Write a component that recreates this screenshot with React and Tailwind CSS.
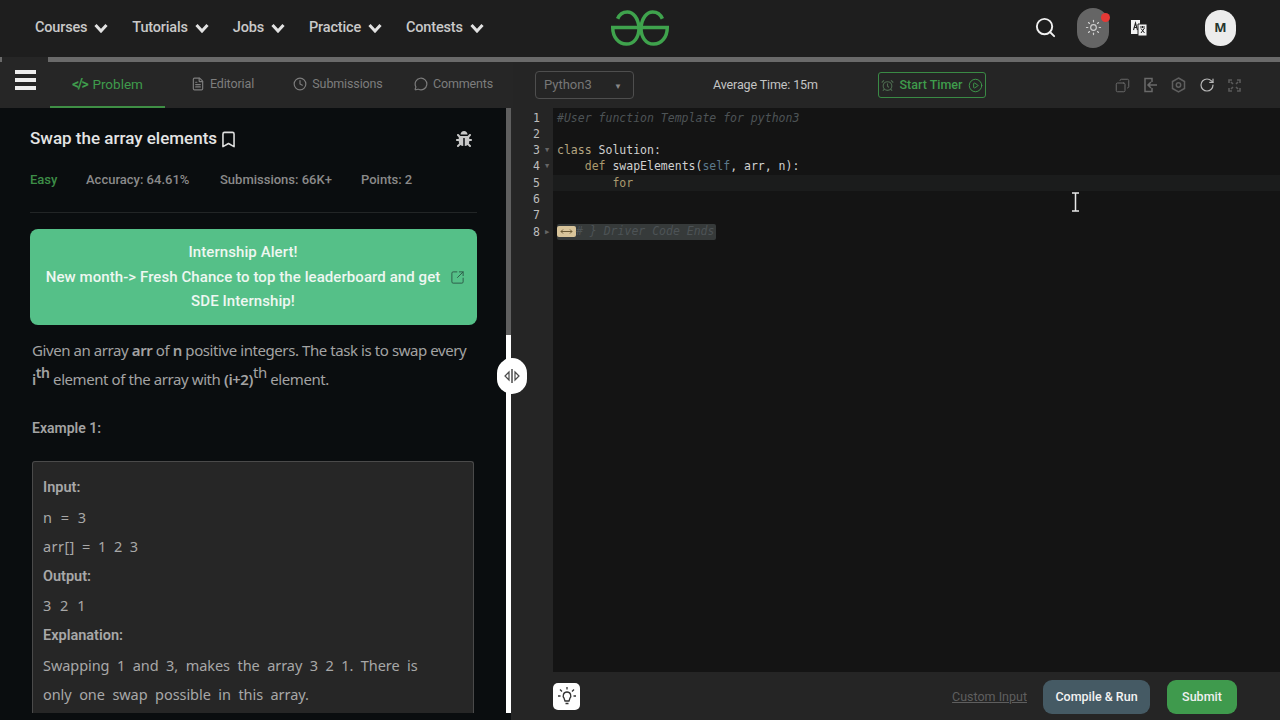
import React from "react";
import { Search, Sun, Bookmark, Clock, FileText, MessageCircle, Copy, RotateCw, SquareArrowOutUpRight, AlarmClock, CirclePlay } from "lucide-react";
import { FaBug } from "react-icons/fa";

const F = { fontFamily: '"Noto Sans", sans-serif' };

function NavItem({ label }) {
  return (
    <div className="flex items-center gap-[7px]">
      <span className="font-['Roboto'] text-[14.5px] font-medium tracking-[-0.012em] text-[#c9c9c9] whitespace-nowrap">{label}</span>
      <svg width="14" height="10" viewBox="0 0 14 10" fill="none" stroke="#e2e2e2" strokeWidth="3"><path d="M1.5 2 L7 8 L12.5 2" /></svg>
    </div>
  );
}

function Logo() {
  return (
    <svg className="mt-[2px]" width="60" height="37" viewBox="0 0 60 38" fill="none" stroke="#3fa34d" strokeWidth="3.6">
      <path d="M7 9 C9 4 13 2 17 2 C23 2 28 8 29 18" />
      <path d="M53 9 C51 4 47 2 43 2 C37 2 32 8 31 18" />
      <path d="M2 18 H29 C29 28 24 35 16 35 C8 35 2 28 2 18 Z" />
      <path d="M58 18 H31 C31 28 36 35 44 35 C52 35 58 28 58 18 Z" />
    </svg>
  );
}

function Translate() {
  return (
    <svg width="18" height="18" viewBox="0 0 18 18">
      <path d="M1 1 H10 V15 H1 Z" fill="#f2f2f2" />
      <path d="M8 5 H17 V17 H8 Z" fill="#f2f2f2" stroke="#222" strokeWidth="1" />
      <path d="M3.5 11 L5.5 4 L7.5 11 M4.3 8.5 H6.7" stroke="#222" strokeWidth="1.1" fill="none" />
      <path d="M10 8 H15 M12.5 7 V9 M11 14 L14.5 9 M11 9.5 L14.5 14" stroke="#222" strokeWidth="1" fill="none" />
    </svg>
  );
}

function TopBar() {
  return (
    <header className="grid h-[57px] shrink-0 grid-cols-[minmax(0,1fr)_auto_minmax(0,1fr)] items-center bg-[#1e1e1e] pb-[2px]">
      <nav className="flex items-center gap-[24px] pl-[35px]">
        <NavItem label="Courses" />
        <NavItem label="Tutorials" />
        <NavItem label="Jobs" />
        <NavItem label="Practice" />
        <NavItem label="Contests" />
      </nav>
      <Logo />
      <div className="flex items-center justify-end pr-[44px]">
        <Search size={23} strokeWidth={2} className="mr-[20px] text-[#f0f0f0]" />
        <div className="relative mr-[21px] flex h-[40px] w-[32px] items-center justify-center rounded-full bg-[#656565]">
          <Sun size={17} strokeWidth={1.6} className="text-[#cfcfcf]" />
          <span className="absolute right-[-1px] top-[5px] h-[9px] w-[9px] rounded-full bg-[#e53935]" />
        </div>
        <div className="mr-[57px]"><Translate /></div>
        <div className="flex h-[36px] w-[31px] items-center justify-center rounded-full bg-[#ececec] text-[13px] font-bold text-[#26352d]">M</div>
      </div>
    </header>
  );
}

function Tab({ icon, label, active, className }) {
  return (
    <div className={`flex h-[46px] items-center justify-center gap-[5px] border-b-2 font-['Roboto'] ${active ? "border-[#3f8f45] text-[13.5px] text-[#3f9c4c]" : "border-transparent text-[12.5px] tracking-[-0.01em] text-[#7d7d7d]"} ${className}`}>
      {icon}
      <span className="whitespace-nowrap">{label}</span>
    </div>
  );
}

function LeftPanel() {
  return (
    <section className="relative flex w-[513px] shrink-0 flex-col">
      <div className="flex h-[46px] shrink-0 items-center bg-[#262626] pl-[50px]">
        <Tab active className="w-[115px]" label="Problem" icon={<span className="text-[14px] font-bold tracking-[-0.1em]">&lt;/&gt;</span>} />
        <Tab className="ml-[25px] w-[65px]" label="Editorial" icon={<FileText size={14} className="shrink-0" />} />
        <Tab className="ml-[40px] w-[86px]" label="Submissions" icon={<Clock size={14} className="shrink-0" />} />
        <Tab className="ml-[33px] w-[79px]" label="Comments" icon={<MessageCircle size={14} className="shrink-0" />} />
      </div>
      <div className="absolute left-[2px] top-[-5px] flex h-[46px] w-[46px] flex-col items-center justify-center gap-[4px] bg-[#262626]">
        <span className="h-[4px] w-[21px] bg-[#eeeeee]" />
        <span className="h-[4px] w-[21px] bg-[#eeeeee]" />
        <span className="h-[4px] w-[21px] bg-[#eeeeee]" />
      </div>
      <div className="flex min-h-0 flex-1 bg-[#0a0d0f]">
        <div className="min-w-0 flex-1">
          <div className="h-[605px] overflow-hidden pl-[30px] pr-[29px]">
            <div className="mt-[19px] flex h-[24px] items-center justify-between pr-[5px]">
              <div className="flex items-center gap-[2px]">
                <h1 className="font-['Roboto'] text-[17px] font-medium text-[#e4e4e4]">Swap the array elements</h1>
                <Bookmark size={19} strokeWidth={2} className="text-[#dedede]" />
              </div>
              <FaBug size={16} className="text-[#c8c8c8]" />
            </div>
            <div className="mt-[19px] flex h-[20px] items-center font-['Roboto'] text-[13px] font-medium text-[#8a8a8a]">
              <span className="w-[56px] text-[#3d8d47]">Easy</span>
              <span className="w-[134px]">Accuracy: 64.61%</span>
              <span className="w-[141px]">Submissions: 66K+</span>
              <span>Points: 2</span>
            </div>
            <div className="mt-[22px] h-px bg-[#222526]" />
            <div className="mt-[16px] flex h-[96px] w-[447px] items-center rounded-[8px] bg-[#55c088] pl-[15px] pr-[12px] text-center font-['Roboto'] text-[15px] font-medium leading-[24.5px] tracking-[0.005em] text-[#eef7f1]">
              <div className="flex-1 whitespace-nowrap">
                Internship Alert!<br />New month-&gt; Fresh Chance to top the leaderboard and get<br />SDE Internship!
              </div>
              <SquareArrowOutUpRight size={15} strokeWidth={1.6} className="ml-[9px] shrink-0 text-[#2f5f4b]" />
            </div>
            <p className="ml-[2px] mt-[11px] w-[440px] text-[15px] leading-[29px] tracking-[-0.028em] text-[#a3a3a3]">
              Given an array <b className="font-semibold">arr</b> of <b className="font-semibold">n</b> positive integers. The task is to swap every
              <br />
              <b className="font-semibold">i<sup className="text-[14px] font-semibold">th</sup></b> element of the array with <b className="font-semibold">(i+2)</b><sup className="text-[15px]">th</sup> element.
            </p>
            <p className="ml-[2px] mt-[24px] font-['Roboto'] text-[14px] font-semibold text-[#a3a3a3]">Example 1:</p>
            <div className="ml-[2px] mt-[22px] w-[442px] rounded-t-[3px] border border-b-0 border-[#4a4a4a] bg-[#262626] px-[10px] pb-[20px] pt-[11px] text-[14.5px] leading-[29.6px] text-[#a8a8a8]">
              <div className="font-['Roboto'] font-semibold">Input:</div>
              <div className="[word-spacing:5px]">n = 3</div>
              <div className="tracking-[0.03em] [word-spacing:3px]">arr[] = 1 2 3</div>
              <div className="font-['Roboto'] font-semibold">Output:</div>
              <div className="[word-spacing:5px]">3 2 1</div>
              <div className="font-['Roboto'] font-semibold">Explanation:</div>
              <div className="tracking-[-0.004em] [word-spacing:3.8px]">Swapping 1 and 3, makes the array 3 2 1. There is<br />only one swap possible in this array.</div>
            </div>
          </div>
        </div>
        <div className="flex h-[605px] w-[5px] shrink-0 flex-col">
          <div className="h-[227px] bg-[#5f5f5f]" />
          <div className="flex-1 bg-white" />
        </div>
        <div className="w-[2px] shrink-0 bg-[#262626]" />
      </div>
      <div className="absolute left-[497px] top-[296px] z-10 flex h-[36px] w-[30px] items-center justify-center rounded-full bg-white">
        <svg width="18" height="16" viewBox="0 0 18 16" fill="none" stroke="#4a4a4a" strokeWidth="1.2">
          <path d="M6 4 L2 8 L6 12 Z" />
          <path d="M12 4 L16 8 L12 12 Z" />
          <path d="M9 1 V15" strokeWidth="1.5" />
        </svg>
      </div>
    </section>
  );
}

const K = ({ c, children }) => <span className={c}>{children}</span>;

function CodeLine({ active, children }) {
  return <div className={`h-[16.3px] pl-[4px] ${active ? "bg-[#1b1c1c]" : ""}`}>{children}</div>;
}

function RightPanel() {
  return (
    <section className="flex min-w-0 flex-1 flex-col bg-[#252525]">
      <div className="flex h-[46px] shrink-0 items-center pl-[22px] pr-[39px]">
        <div className="flex h-[28px] w-[99px] items-center justify-between rounded-[4px] border border-[#4e4e4e] pl-[8px] pr-[11px] font-['Roboto'] text-[13px] text-[#777]">
          Python3
          <span className="mt-[4px] text-[8px] text-[#888]">▼</span>
        </div>
        <span className="ml-[79px] w-[104px] whitespace-nowrap font-['Roboto'] text-[12.5px] tracking-[-0.01em] text-[#c4c4c4]">Average Time: 15m</span>
        <div className="ml-[61px] flex h-[26px] w-[108px] items-center justify-center gap-[6px] whitespace-nowrap rounded-[3px] border border-[#3a8a45] font-['Roboto'] text-[12.5px] font-medium text-[#3f9c4c]">
          <AlarmClock size={13} className="shrink-0 text-[#4d6b50]" />
          Start Timer
          <CirclePlay size={15} strokeWidth={1.5} className="shrink-0" />
        </div>
        <div className="ml-auto flex items-center gap-[13px] text-[#6a6a6a]">
          <Copy size={15} strokeWidth={1.6} className="-scale-x-100" />
          <svg width="15" height="16" viewBox="0 0 15 16" fill="none" stroke="#6a6a6a" strokeWidth="1.5"><path d="M9 5 V1.5 H2 V14.5 H9 V11 M5 8 H14 M8 5 L5 8 L8 11" /></svg>
          <svg width="15" height="16" viewBox="0 0 15 16" fill="none" stroke="#5f5f5f" strokeWidth="1.5"><path d="M7.5 1 L13.5 4.5 V11.5 L7.5 15 L1.5 11.5 V4.5 Z" /><circle cx="7.5" cy="8" r="2.2" /></svg>
          <RotateCw size={16} strokeWidth={1.8} className="text-[#b8b8b8]" />
          <svg width="13" height="13" viewBox="0 0 13 13" fill="none" stroke="#5a5a5a" strokeWidth="1.6"><path d="M1 4 V1 H4 M9 1 H12 V4 M12 9 V12 H9 M4 12 H1 V9 M3 3 L5 5 M10 3 L8 5 M10 10 L8 8 M3 10 L5 8" /></svg>
        </div>
      </div>
      <div className="relative flex h-[564px] shrink-0" style={{ fontFamily: '"DejaVu Sans Mono", monospace' }}>
        <div className="w-[40px] shrink-0 pt-[1.5px] text-[11.5px] leading-[16.3px] text-[#bdbdbd]">
          {["1", "2", "3", "4", "5", "6", "7", "8"].map((n) => (
            <div key={n} className="relative h-[16.3px] pr-[13px] text-right">
              {n}
              {(n === "3" || n === "4") && <span className="absolute left-[32px] top-0 text-[7px] text-[#666]">▼</span>}
              {n === "8" && <span className="absolute left-[32px] top-0 text-[7px] text-[#666]">▶</span>}
            </div>
          ))}
        </div>
        <div className="flex-1 whitespace-pre bg-[#141414] pt-[1.5px] text-[11.5px] leading-[16.3px] text-[#d0d0d0]">
          <CodeLine><K c="italic text-[#4d5356]">#User function Template for python3</K></CodeLine>
          <CodeLine> </CodeLine>
          <CodeLine><K c="text-[#b5a682]">class</K> Solution:</CodeLine>
          <CodeLine>    <K c="text-[#ab9a6e]">def</K> swapElements(<K c="text-[#5d7a8c]">self</K>, arr, n):</CodeLine>
          <CodeLine active>        <K c="text-[#ab9a6e]">for</K> </CodeLine>
          <CodeLine> </CodeLine>
          <CodeLine> </CodeLine>
          <CodeLine>
            <span className="flex h-[16px] w-[159px] items-center rounded-[2px] bg-[#363a3a]">
              <span className="flex h-[11px] w-[19px] shrink-0 items-center justify-center rounded-[2px] bg-[#d8c49a]">
                <svg width="13" height="7" viewBox="0 0 13 7" fill="none" stroke="#6b5a36" strokeWidth="1"><path d="M1 3.5 H12 M3 1.5 L1 3.5 L3 5.5 M10 1.5 L12 3.5 L10 5.5" /></svg>
              </span>
              <span className="italic text-[#4d5356]"># } Driver Code Ends</span>
            </span>
          </CodeLine>
        </div>
        <svg className="absolute left-[558px] top-[84px]" width="9" height="20" viewBox="0 0 9 20" fill="none" stroke="#e8e8e8" strokeWidth="1.5">
          <path d="M1 1 H8 M4.5 1 V19 M1 19 H8" />
        </svg>
      </div>
      <div className="flex min-h-0 flex-1 items-center pl-[40px] pr-[43px]">
        <div className="flex h-[27px] w-[27px] items-center justify-center rounded-[5px] bg-white">
          <svg width="20" height="20" viewBox="0 0 20 20" fill="none" stroke="#333" strokeWidth="1.3">
            <path d="M7 12 C5.5 10.5 6 6 10 6 C14 6 14.5 10.5 13 12 L12 15 H8 Z" />
            <path d="M8.5 17.5 H11.5 M10 1 V3.5 M3 3.5 L5 5.5 M17 3.5 L15 5.5 M1 10 H3.5 M16.5 10 H19" />
          </svg>
        </div>
        <span className="ml-auto mt-[2px] font-['Roboto'] text-[12.5px] text-[#5f5f5f] underline">Custom Input</span>
        <div className="ml-[16px] mt-[2px] flex h-[34px] w-[107px] items-center justify-center rounded-[9px] bg-[#455a64] font-['Roboto'] text-[12.5px] font-medium text-[#f2f2f2]">Compile &amp; Run</div>
        <div className="ml-[17px] mt-[2px] flex h-[34px] w-[70px] items-center justify-center rounded-[9px] bg-[#3f9a4d] font-['Roboto'] text-[12.5px] font-medium text-[#f0f0f0]">Submit</div>
      </div>
    </section>
  );
}

export default function App() {
  return (
    <div className="flex h-[720px] w-[1280px] flex-col overflow-hidden bg-[#1e1e1e]" style={F}>
      <TopBar />
      <div className="h-[5px] shrink-0 bg-[#6a6a6a]" />
      <div className="flex min-h-0 flex-1">
        <LeftPanel />
        <RightPanel />
      </div>
    </div>
  );
}
